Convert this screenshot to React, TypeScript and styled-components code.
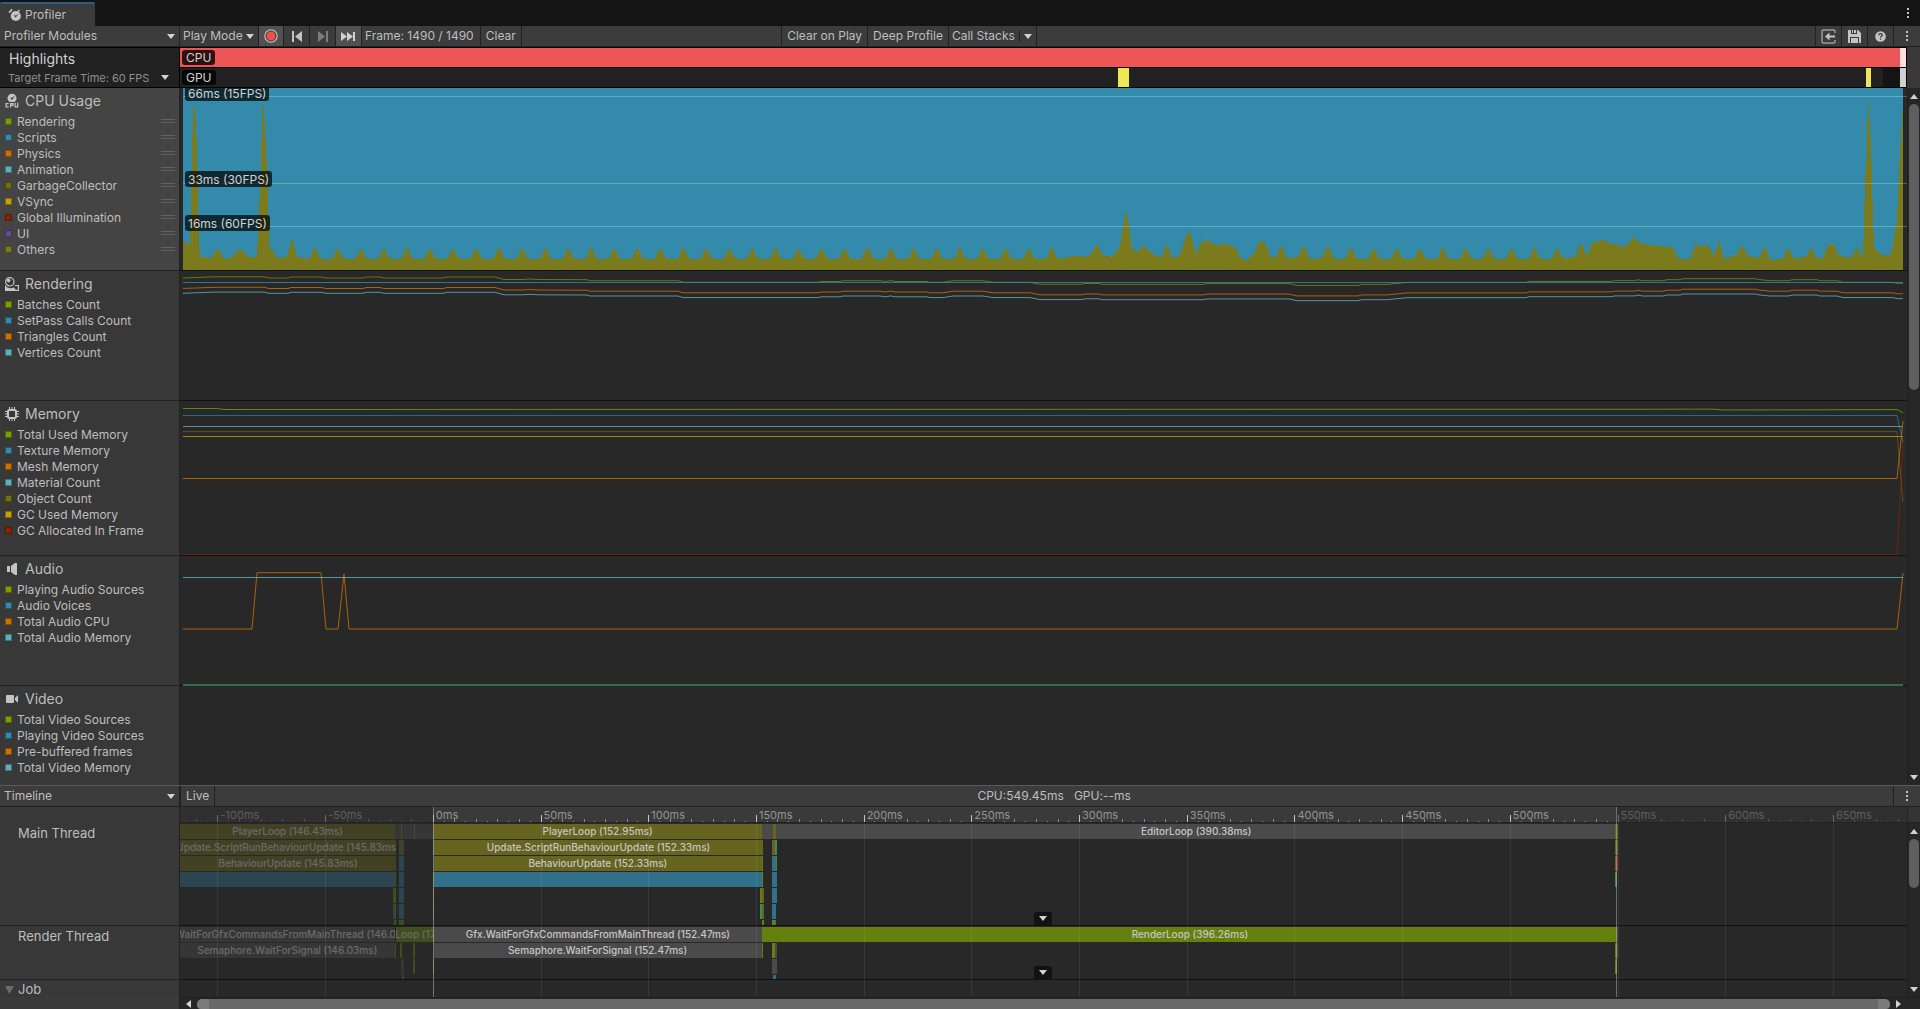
import React from "react";
import styled, { createGlobalStyle } from "styled-components";

/* ---------- theme ---------- */

const C = {
  window: "#141414",
  bar: "#3c3c3c",
  panel: "#383838",
  selected: "#444444",
  chart: "#282828",
  line: "#222222",
  text: "#bebebe",
  icon: "#c4c4c4",
};

const GlobalStyle = createGlobalStyle`
  *, *::before, *::after { box-sizing: border-box; }
  html, body { margin: 0; height: 100%; background: ${C.window}; overflow: hidden; }
  body { font-family: Inter, Roboto, "Liberation Sans", sans-serif; font-size: 12px; line-height: 16px; color: ${C.text}; }
  button, select, input { font: inherit; color: inherit; margin: 0; }
`;

const SIDE = 180;

const Window = styled.main`
  display: flex;
  flex-direction: column;
  height: 100vh;
  background: ${C.chart};
`;

/* ---------- tab strip ---------- */

const TabStrip = styled.header`
  display: flex;
  align-items: flex-end;
  justify-content: space-between;
  height: 26px;
  background: ${C.window};
`;

const Tab = styled.h1`
  display: flex;
  align-items: center;
  gap: 3px;
  width: 95px;
  height: 24px;
  margin: 0;
  padding-left: 8px;
  border-top: 2px solid #2c5d87;
  border-radius: 2px 2px 0 0;
  background: ${C.bar};
  font-size: 12px;
  font-weight: 400;
`;

const IconButton = styled.button<{ $width?: number; $lit?: boolean; $edge?: "left" | "right" }>`
  display: flex;
  align-items: center;
  justify-content: center;
  width: ${(p) => p.$width ?? 26}px;
  height: 100%;
  padding: 0;
  border: 0 solid ${C.line};
  border-left-width: ${(p) => (p.$edge === "left" ? 1 : 0)}px;
  border-right-width: ${(p) => (p.$edge === "right" ? 1 : 0)}px;
  background: ${(p) => (p.$lit ? "#515151" : "transparent")};
`;

/* ---------- toolbars ---------- */

const Toolbar = styled.div`
  display: flex;
  flex: none;
  height: 21px;
  background: ${C.bar};
  border-bottom: 1px solid ${C.line};
`;

const TextButton = styled.button<{ $edge?: boolean }>`
  height: 100%;
  padding: 0 5px;
  border: 0;
  border-right: 1px solid ${C.line};
  border-left: ${(p) => (p.$edge ? `1px solid ${C.line}` : "0")};
  background: transparent;
  white-space: nowrap;
`;

const SplitButton = styled(TextButton)`
  padding: 0 4px 0 3px;
  border-right: 0;
`;

const FrameLabel = styled.span`
  padding: 2px 6px 0 3px;
  border-right: 1px solid ${C.line};
  white-space: nowrap;
`;

const Space = styled.div<{ $grow: number }>`
  flex: ${(p) => p.$grow} 1 0;
`;

const StackArrow = styled.button`
  display: flex;
  align-items: center;
  height: 100%;
  padding: 0 4px 0 0;
  border: 0;
  border-right: 1px solid ${C.line};
  background: transparent;
  &::before {
    content: "";
    width: 1px;
    height: 12px;
    margin-right: 4px;
    background: ${C.line};
  }
`;

const FrameTotals = styled.output`
  flex: 1;
  padding-top: 2px;
  text-align: center;
  white-space: pre;
`;

const Picker = styled.span<{ $width?: number; $pad: number; $right: number; $edge?: boolean; $muted?: boolean }>`
  display: grid;
  flex: none;
  align-items: center;
  width: ${(p) => (p.$width ? `${p.$width}px` : "auto")};
  height: 100%;
  border-right: ${(p) => (p.$edge ? `1px solid ${C.line}` : "0")};
  color: ${(p) => (p.$muted ? "#8f8f8f" : C.text)};
  font-size: ${(p) => (p.$muted ? 11 : 12)}px;
  select {
    grid-area: 1 / 1;
    width: 100%;
    height: 100%;
    padding: 0 ${(p) => p.$right + 8}px 0 ${(p) => p.$pad}px;
    border: 0;
    background: transparent;
    appearance: none;
    opacity: 1;
  }
  svg {
    grid-area: 1 / 1;
    justify-self: end;
    margin-right: ${(p) => p.$right}px;
    pointer-events: none;
  }
`;

type PickerProps = { label: string; value: string; width?: number; pad: number; right: number; edge?: boolean; muted?: boolean };

function Dropdown({ label, value, width, pad, right, edge, muted }: PickerProps) {
  return (
    <Picker $width={width} $pad={pad} $right={right} $edge={edge} $muted={muted}>
      <select aria-label={label}>
        <option>{value}</option>
      </select>
      <Caret dir="down" />
    </Picker>
  );
}

/* ---------- icons ---------- */

const CARETS = {
  down: { w: 8, h: 5, d: "M0 0H8L4 5Z" },
  up: { w: 8, h: 5, d: "M0 5H8L4 0Z" },
  left: { w: 5, h: 8, d: "M5 0V8L0 4Z" },
  right: { w: 5, h: 8, d: "M0 0V8L5 4Z" },
};

function Caret({ dir }: { dir: keyof typeof CARETS }) {
  const c = CARETS[dir];
  return (
    <svg width={c.w} height={c.h} viewBox={`0 0 ${c.w} ${c.h}`} aria-hidden>
      <path d={c.d} fill="#d2d2d2" />
    </svg>
  );
}

const Kebab = () => (
  <svg width="2" height="10" viewBox="0 0 2 10" aria-hidden>
    <path d="M0 0h2v2h-2zM0 4h2v2h-2zM0 8h2v2h-2z" fill={C.icon} />
  </svg>
);

const StopwatchIcon = () => (
  <svg width="14" height="14" viewBox="0 0 14 14" aria-hidden>
    <path d="M1 4.6 4.2 1.4" stroke={C.icon} strokeWidth="1.6" fill="none" />
    <circle cx="7.8" cy="8" r="5.1" fill={C.icon} />
    <path d="M5.6 7.2 7.6 9.6 11.4 5.2 8.2 7.6Z" fill={C.bar} />
    <path d="M10 3.4 11.6 2" stroke={C.icon} strokeWidth="1.4" />
  </svg>
);

const RecordIcon = () => (
  <svg width="14" height="14" viewBox="0 0 14 14" aria-hidden>
    <circle cx="7" cy="7" r="6.2" fill="none" stroke="#c4c4c4" strokeWidth="1.1" />
    <circle cx="7" cy="7" r="4.2" fill="#ff4c40" />
  </svg>
);

const PrevIcon = () => (
  <svg width="12" height="11" viewBox="0 0 12 11" aria-hidden>
    <path d="M1 0h2v11H1zM11 0v11L4 5.5z" fill={C.icon} />
  </svg>
);

const NextIcon = () => (
  <svg width="12" height="11" viewBox="0 0 12 11" aria-hidden>
    <path d="M9 0h2v11H9zM1 0v11l7-5.5z" fill="#7d7d7d" />
  </svg>
);

const LastIcon = () => (
  <svg width="15" height="9" viewBox="0 0 15 9" aria-hidden>
    <path d="M0 0v9l6-4.500zM6 0v9l6-4.500zM12 0h2v9h-2z" fill="#d2d2d2" />
  </svg>
);

const LoadIcon = () => (
  <svg width="15" height="15" viewBox="0 0 15 15" aria-hidden>
    <path d="M14 4V2.500Q14 1 12.500 1H2.500Q1 1 1 2.500V12.500Q1 14 2.500 14H12.500Q14 14 14 12.500V11" fill="none" stroke="#9a9a9a" strokeWidth="1.5" />
    <path d="M4 7.500 8.500 3.500V6.500H14V8.500H8.500V11.500Z" fill={C.icon} />
  </svg>
);

const SaveIcon = () => (
  <svg width="13" height="13" viewBox="0 0 13 13" aria-hidden>
    <path fillRule="evenodd" d="M0 0H3V4H9V0H10L13 3V13H11V7H2V13H0ZM4 0H5V3H4ZM6 0H8V3H6ZM3 8H10V13H3Z" fill={C.icon} />
  </svg>
);

const HelpIcon = () => (
  <svg width="11" height="11" viewBox="0 0 11 11" aria-hidden>
    <circle cx="5.500" cy="5.500" r="5.300" fill={C.icon} />
    <path d="M3.700 4.200C3.800 2.200 7.300 2.200 7.300 4.200 7.300 5.300 5.500 5.200 5.500 6.600M5.500 7.600V8.800" fill="none" stroke="#333" strokeWidth="1.200" />
  </svg>
);

const CpuIcon = () => (
  <svg width="15" height="16" viewBox="0 0 15 16" aria-hidden>
    <circle cx="7.500" cy="5" r="4.800" fill={C.icon} />
    <path d="M5.500 4.800 7.500 6.800 11 2.400 8 4.200Z" fill={C.selected} />
    <path d="M0 9H15V16H0Z" fill={C.selected} />
    <path d="M4 10.700H1.200V14.300H4M6 15V10.700H8.600V12.800H6M10.800 10V14.300H13.600V10" fill="none" stroke={C.icon} strokeWidth="1.300" />
  </svg>
);

const RenderingIcon = () => (
  <svg width="14" height="14" viewBox="0 0 14 14" aria-hidden>
    <circle cx="4.800" cy="4.800" r="4.200" fill="none" stroke={C.icon} strokeWidth="1.200" />
    <circle cx="3.600" cy="3.600" r="1.800" fill={C.icon} />
    <path d="M0.600 8.500V13.300H13.400V8.500H9.800" fill="none" stroke={C.icon} strokeWidth="1.200" />
    <path d="M1 9.500Q4 12.500 9 10.500L11 13H1Z" fill={C.icon} />
  </svg>
);

const MemoryIcon = () => (
  <svg width="14" height="14" viewBox="0 0 14 14" aria-hidden>
    <path d="M4.500 0V14M7 0V14M9.500 0V14M0 4.500H14M0 7H14M0 9.500H14" stroke={C.icon} strokeWidth="1" />
    <rect x="3" y="3" width="8" height="8" rx="1.500" fill={C.panel} stroke={C.icon} strokeWidth="2" />
  </svg>
);

const AudioIcon = () => (
  <svg width="14" height="14" viewBox="0 0 14 14" aria-hidden>
    <path d="M2 4H5V10H2ZM6 4 10 1H12V13H10L6 10Z" fill={C.icon} />
  </svg>
);

const VideoIcon = () => (
  <svg width="14" height="14" viewBox="0 0 14 14" aria-hidden>
    <rect x="1" y="3" width="8" height="8" rx="1" fill={C.icon} />
    <path d="M10 6 13 3V11L10 8Z" fill={C.icon} />
  </svg>
);

/* ---------- highlights ---------- */

const Highlights = styled.section`
  display: flex;
  flex: none;
  height: 41px;
  background: ${C.panel};
`;

const HighlightsSide = styled.div`
  width: ${SIDE}px;
  padding-top: 1px;
  border: solid #000;
  border-width: 1px 1px 1px 0;
  background: #212121;
`;

const HighlightsTitle = styled.h2`
  margin: 0;
  padding-left: 9px;
  font-size: 14px;
  line-height: 20px;
  font-weight: 400;
  color: #d2d2d2;
`;

const TargetRow = styled.div`
  height: 17px;
`;

const Strips = styled.div`
  flex: 1;
  border-top: 1px solid #000;
  border-right: 1px solid #000;
`;

const Strip = styled.div<{ $hot?: boolean }>`
  position: relative;
  height: 20px;
  border-bottom: 1px solid #000;
  background: ${(p) => (p.$hot ? "#ed5656" : "#212121")};
`;

const Mark = styled.i<{ $color: string }>`
  position: absolute;
  top: 0;
  bottom: 0;
  background: ${(p) => p.$color};
`;

const Badge = styled.span`
  position: absolute;
  left: 2px;
  padding: 0 4px;
  border-radius: 3px;
  background: rgba(0, 0, 0, 0.8);
  color: #d2d2d2;
  white-space: nowrap;
`;

const StripBadge = styled(Badge)`
  top: 2px;
  line-height: 15px;
`;

const RightGutter = styled.div`
  width: 13px;
`;

const GPU_MARKS = [
  { from: 938, to: 949, color: "#efe856" },
  { from: 1686, to: 1691, color: "#efe856" },
  { from: 1703, to: 1720, color: "#141414" },
  { from: 1720, to: 1726, color: "#d0d0d0" },
];

const stripSpan = (from: number, to: number) => ({ left: `${(from / 1726) * 100}%`, width: `${((to - from) / 1726) * 100}%` });

/* ---------- module list ---------- */

const Modules = styled.section`
  display: flex;
  flex: 1;
  min-height: 0;
`;

const ModuleList = styled.div`
  flex: 1;
  min-width: 0;
  overflow: hidden;
`;

const ModuleRow = styled.article<{ $height: number }>`
  display: flex;
  height: ${(p) => p.$height}px;
`;

const ModuleSide = styled.div<{ $selected?: boolean }>`
  flex: none;
  width: ${SIDE}px;
  border: solid ${C.line};
  border-width: 0 1px 1px 0;
  background: ${(p) => (p.$selected ? C.selected : C.panel)};
`;

const ModuleTitle = styled.h2`
  display: flex;
  align-items: center;
  gap: 6px;
  height: 25px;
  margin: 0;
  padding-left: 5px;
  font-size: 14px;
  font-weight: 400;
  svg { width: 14px; }
`;

const Legend = styled.ul`
  margin: 0;
  padding: 0;
  list-style: none;
`;

const LegendItem = styled.li`
  display: flex;
  align-items: center;
  justify-content: space-between;
  height: 16px;
  padding: 0 4px 0 5px;
  label {
    display: flex;
    align-items: center;
    gap: 5px;
  }
`;

const LegendText = styled.span`
  padding-top: 2px;
`;

const Swatch = styled.input<{ $color: string }>`
  width: 7px;
  height: 7px;
  border: 1px solid rgba(0, 0, 0, 0.35);
  background: ${(p) => p.$color};
  appearance: none;
`;

const Grip = styled.span`
  width: 14px;
  height: 4px;
  border: solid #626262;
  border-width: 1px 0;
`;

const ChartPane = styled.div`
  position: relative;
  flex: 1;
  min-width: 0;
  padding: 0 4px 0 3px;
  border-bottom: 1px solid #111;
  background: ${C.chart};
`;

const ChartSvg = styled.svg`
  display: block;
  width: 100%;
  height: 100%;
  overflow: visible;
`;

const GuideLine = styled.i`
  position: absolute;
  left: 3px;
  right: 0;
  height: 1px;
  background: rgba(255, 255, 255, 0.25);
`;

const GuideBadge = styled(Badge)`
  left: 5px;
  padding: 1px 3px 0;
  line-height: 15px;
  background: rgba(0, 0, 0, 0.7);
`;

const Clip = styled.div`
  position: absolute;
  inset: 0;
  overflow: hidden;
`;

const COLORS = {
  green: "#7a9e00",
  blue: "#338aab",
  orange: "#cc7000",
  cyan: "#60b0bb",
  olive: "#756f10",
  gold: "#c8a000",
  red: "#8a2407",
  purple: "#674b8e",
  other: "#7b7b1e",
};

type Point = [number, number];

/* Outline of the "Others" band. The first and last stretches are sampled by hand,
   the regular ones between are garbage free frames with one bump every 23 px. */
const OTHERS_START: Point[] = [
  [0, 153], [4, 155], [7, 158], [8, 107], [9, 62], [10, 29], [11, 12], [13, 34], [14, 67], [15, 122], [16, 150], [17, 169],
  [28, 170], [35, 160], [41, 171], [47, 170], [57, 160], [63, 167], [69, 170], [74, 168], [75, 143], [76, 122], [78, 77],
  [79, 30], [80, 9], [82, 42], [83, 57], [85, 107], [86, 158], [90, 163], [94, 170], [104, 169], [109, 150], [114, 169],
];

const OTHERS_END: Point[] = [
  [892, 168], [898, 168], [904, 169], [909, 165], [914, 155], [919, 167], [928, 169], [932, 166], [937, 158], [941, 134], [943, 121],
  [946, 137], [949, 161], [955, 164], [961, 157], [969, 166], [976, 169], [979, 168], [984, 155], [989, 170], [996, 168],
  [1000, 159], [1003, 148], [1006, 142], [1010, 154], [1013, 166], [1018, 155], [1023, 152], [1034, 157], [1041, 156],
  [1049, 158], [1053, 160], [1058, 171], [1064, 172], [1071, 166], [1075, 155], [1081, 153], [1088, 169], [1093, 169],
  [1098, 157], [1104, 170], [1115, 169], [1121, 157], [1127, 171], [1139, 170], [1145, 157], [1151, 171],
];

const OTHERS_TAIL: Point[] = [
  [1383, 170], [1392, 169], [1398, 155], [1404, 168], [1409, 155], [1418, 152], [1426, 155], [1443, 159], [1450, 149],
  [1456, 155], [1474, 158], [1490, 159], [1495, 171], [1507, 171], [1513, 156], [1520, 159], [1524, 155], [1531, 168],
  [1536, 152], [1541, 171], [1550, 168], [1554, 166], [1559, 157], [1565, 168], [1576, 170], [1582, 158], [1587, 172],
  [1600, 171], [1605, 159], [1610, 170], [1623, 169], [1628, 159], [1633, 170], [1640, 170], [1645, 157], [1651, 157],
  [1656, 168], [1668, 170], [1674, 159], [1680, 171], [1681, 132], [1682, 94], [1684, 62], [1685, 3], [1686, 25], [1688, 54],
  [1689, 97], [1691, 159], [1695, 164], [1702, 168], [1708, 166], [1711, 149], [1714, 132], [1715, 107], [1717, 62], [1719, 32], [1720, 14],
];

function bumps(from: number, count: number, step: number): Point[] {
  return Array.from({ length: count }).flatMap((_, i): Point[] => {
    const x = from + i * step;
    const top = i % 4 === 0 ? 158 : 160;
    return [[x - 6, 171], [x - 3, 165], [x, top], [x + 3, 166], [x + 6, 171]];
  });
}

const OTHERS: Point[] = [
  ...OTHERS_START,
  ...bumps(132, 33, 23.03),
  ...OTHERS_END,
  ...bumps(1168, 10, 22.95),
  ...OTHERS_TAIL,
];

const SPECKS: { x: number; y: number; color: string }[] = [
  [22, 168], [63, 165], [152, 170], [288, 170], [372, 171], [387, 170], [392, 165], [455, 165], [456, 160], [540, 171],
  [673, 170], [696, 164], [820, 170], [927, 168], [941, 126], [1024, 151], [1067, 168], [1418, 151], [1551, 167], [1702, 167], [1647, 156], [1649, 156],
].map(([x, y], i) => ({ x, y, color: i % 5 === 4 ? COLORS.purple : "#d07a10" }));

const BATCHES: Point[] = [
  [0, 7], [31, 5.8], [81, 5.8], [86, 7], [105, 7], [108, 6], [138, 6], [143, 7], [180, 7], [183, 6], [197, 6], [201, 7], [260, 7],
  [264, 6], [312, 6], [321, 8.5], [340, 8.5], [346, 8], [356, 8.5], [404, 8.7], [407, 9.7], [495, 9.7], [500, 11.3], [634, 11.3],
  [639, 10.5], [657, 10.5], [660, 9.7], [697, 9.7], [702, 10.5], [708, 9.6], [712, 10.5], [744, 10.5], [747, 11.3], [760, 11.3],
  [770, 9.7], [800, 9.7], [810, 11.3], [847, 11.3], [857, 13.3], [898, 13.3], [902, 12.5], [916, 12.5], [919, 13.4], [1020, 13.4],
  [1024, 12.6], [1106, 12.6], [1114, 14.4], [1175, 14.4], [1179, 13.4], [1204, 13.4], [1224, 11.4], [1343, 11.4], [1346, 10.4],
  [1428, 10.4], [1432, 9.6], [1452, 9.6], [1455, 8.8], [1460, 9.7], [1480, 9.7], [1484, 8.7], [1497, 8.7], [1500, 7.7], [1572, 7.7],
  [1577, 8.7], [1587, 9.7], [1605, 9.7], [1610, 8.7], [1634, 8.7], [1637, 9.7], [1654, 9.7], [1660, 11.3], [1710, 11.3], [1714, 12.3], [1720, 12.3],
];

const shift = (points: Point[], dy: number): Point[] => points.map(([x, y]) => [x, y + dy]);
const flat = (y: number, end = y): Point[] => [[0, y], [1714, y], [1720, end]];
const path = (points: Point[]) => points.map(([x, y]) => `${x},${y}`).join(" ");

type Series = { color: string; points: Point[]; strength?: number; thick?: number };
type Module = {
  name: string;
  icon: React.ReactNode;
  height: number;
  legend: [string, string][];
  series: Series[];
  selected?: boolean;
};

const MODULES: Module[] = [
  {
    name: "CPU Usage",
    icon: <CpuIcon />,
    height: 183,
    selected: true,
    legend: [
      ["Rendering", COLORS.green], ["Scripts", COLORS.blue], ["Physics", COLORS.orange], ["Animation", COLORS.cyan],
      ["GarbageCollector", COLORS.olive], ["VSync", COLORS.gold], ["Global Illumination", COLORS.red], ["UI", COLORS.purple],
      ["Others", COLORS.other],
    ],
    series: [],
  },
  {
    name: "Rendering",
    icon: <RenderingIcon />,
    height: 130,
    legend: [
      ["Batches Count", COLORS.green], ["SetPass Calls Count", COLORS.blue], ["Triangles Count", COLORS.orange], ["Vertices Count", COLORS.cyan],
    ],
    series: [
      { color: COLORS.green, points: BATCHES, strength: 0.7 },
      { color: COLORS.blue, points: flat(11.5) },
      { color: COLORS.orange, points: shift(BATCHES, 10.5) },
      { color: COLORS.cyan, points: shift(BATCHES, 15.3) },
    ],
  },
  {
    name: "Memory",
    icon: <MemoryIcon />,
    height: 155,
    legend: [
      ["Total Used Memory", COLORS.green], ["Texture Memory", COLORS.blue], ["Mesh Memory", COLORS.orange], ["Material Count", COLORS.cyan],
      ["Object Count", COLORS.olive], ["GC Used Memory", COLORS.gold], ["GC Allocated In Frame", COLORS.red],
    ],
    series: [
      { color: COLORS.green, points: [[0, 7.5], [34, 7.5], [41, 8.5], [1530, 8.2], [1540, 9], [1714, 8.6], [1720, 12]] },
      { color: COLORS.blue, points: flat(14.5, 41), strength: 0.65 },
      { color: COLORS.cyan, points: [[0, 25.5], [1720, 25.5]] },
      { color: COLORS.olive, points: flat(30.6, 101), strength: 0.6 },
      { color: COLORS.gold, points: [[0, 35.5], [1720, 35.5]], strength: 0.75 },
      { color: COLORS.orange, points: flat(77.5, 20) },
      { color: COLORS.red, points: flat(153.6, 41), strength: 0.7 },
    ],
  },
  {
    name: "Audio",
    icon: <AudioIcon />,
    height: 130,
    legend: [
      ["Playing Audio Sources", COLORS.green], ["Audio Voices", COLORS.blue], ["Total Audio CPU", COLORS.orange], ["Total Audio Memory", COLORS.cyan],
    ],
    series: [
      {
        color: COLORS.orange,
        points: [[0, 73], [69, 73], [74, 16.7], [138, 16.7], [143, 73], [155, 73], [161, 18], [166, 73], [1714, 73], [1720, 17]],
      },
      { color: COLORS.cyan, points: [[0, 21.5], [1720, 21.5]] },
      { color: "#407a56", points: [[0, 129], [1720, 129]], thick: 2 },
    ],
  },
  {
    name: "Video",
    icon: <VideoIcon />,
    height: 130,
    legend: [
      ["Total Video Sources", COLORS.green], ["Playing Video Sources", COLORS.blue], ["Pre-buffered frames", COLORS.orange], ["Total Video Memory", COLORS.cyan],
    ],
    series: [],
  },
];

const GUIDES = [
  { text: "66ms (15FPS)", line: 8, top: -3 },
  { text: "33ms (30FPS)", line: 95, top: 83 },
  { text: "16ms (60FPS)", line: 138, top: 127 },
];

function CpuChart() {
  return (
    <>
      <ChartSvg viewBox="0 0 1720 182" preserveAspectRatio="none" role="img" aria-label="CPU usage">
        <rect width="1720" height="182" fill={COLORS.blue} />
        <polygon points={`0,182 ${path(OTHERS)} 1720,182`} fill={COLORS.other} shapeRendering="crispEdges" />
        {SPECKS.map((s) => (
          <rect key={`${s.x}-${s.y}`} x={s.x} y={s.y} width="1" height="1" fill={s.color} />
        ))}
      </ChartSvg>
      <Clip>
        {GUIDES.map((g) => (
          <React.Fragment key={g.text}>
            <GuideLine style={{ top: g.line }} />
            <GuideBadge style={{ top: g.top }}>{g.text}</GuideBadge>
          </React.Fragment>
        ))}
      </Clip>
    </>
  );
}

function ModuleView({ module }: { module: Module }) {
  return (
    <ModuleRow $height={module.height}>
      <ModuleSide $selected={module.selected}>
        <ModuleTitle>
          {module.icon}
          {module.name}
        </ModuleTitle>
        <Legend>
          {module.legend.map(([name, color]) => (
            <LegendItem key={name}>
              <label>
                <Swatch type="checkbox" defaultChecked $color={color} />
                <LegendText>{name}</LegendText>
              </label>
              {module.selected && <Grip />}
            </LegendItem>
          ))}
        </Legend>
      </ModuleSide>
      <ChartPane>
        {module.selected ? (
          <CpuChart />
        ) : (
          <ChartSvg viewBox={`0 0 1720 ${module.height - 1}`} preserveAspectRatio="none" role="img" aria-label={module.name}>
            {module.series.map((s) => (
              <polyline
                key={s.color}
                points={path(s.points)}
                fill="none"
                stroke={s.color}
                strokeWidth={s.thick ?? 1}
                strokeOpacity={s.strength ?? 0.8}
                vectorEffect="non-scaling-stroke"
              />
            ))}
          </ChartSvg>
        )}
      </ChartPane>
    </ModuleRow>
  );
}

/* ---------- scroll bars ---------- */

const VTrack = styled.div`
  display: flex;
  flex: none;
  flex-direction: column;
  width: 13px;
  border-left: 1px solid #202020;
  background: #262626;
`;

const VThumb = styled.div<{ $share: number }>`
  flex: ${(p) => p.$share} 1 0;
  margin: 0 1px;
  border-radius: 5px;
  background: #5f5f5f;
`;

const StepButton = styled.button<{ $wide?: boolean }>`
  display: flex;
  flex: none;
  align-items: center;
  justify-content: center;
  width: ${(p) => (p.$wide ? "17px" : "100%")};
  height: ${(p) => (p.$wide ? "100%" : "16px")};
  padding: 0;
  border: 0;
  background: transparent;
`;

function VScroll({ thumb, rest }: { thumb: number; rest: number }) {
  return (
    <VTrack>
      <StepButton aria-label="Scroll up"><Caret dir="up" /></StepButton>
      <VThumb $share={thumb} />
      <Space $grow={rest} />
      <StepButton aria-label="Scroll down"><Caret dir="down" /></StepButton>
    </VTrack>
  );
}

const HTrack = styled.div`
  display: flex;
  flex: none;
  height: 12px;
  background: #262626;
  border-top: 1px solid #202020;
`;

const HSide = styled.div`
  width: ${SIDE}px;
  margin-top: -1px;
  border-right: 1px solid ${C.line};
  background: #3a3a3a;
`;

const HThumb = styled.div`
  flex: 1;
  margin-top: 1px;
  border: solid #7b7b7b;
  border-width: 0 12px;
  border-radius: 5px 5px 4px 4px;
  background: #686868;
`;

/* ---------- timeline ---------- */

const Timeline = styled.section`
  display: flex;
  flex: none;
  flex-direction: column;
  border-top: 1px solid #5a5a5a;
`;

const TimelineBody = styled.div`
  display: flex;
`;

const ThreadNames = styled.div`
  flex: none;
  width: ${SIDE}px;
  padding-top: 16px;
  border-right: 1px solid ${C.line};
  background: ${C.panel};
`;

const ThreadName = styled.h3<{ $height: number }>`
  display: flex;
  align-items: flex-start;
  gap: 4px;
  height: ${(p) => p.$height}px;
  margin: 0;
  padding-left: 18px;
  border-bottom: 1px solid ${C.line};
  font-size: 13px;
  line-height: 21px;
  font-weight: 400;
`;

const JobName = styled(ThreadName)`
  align-items: center;
  padding: 2px 0 0 5px;
  border-bottom: 0;
`;

const Tracks = styled.div`
  position: relative;
  flex: 1;
  min-width: 0;
  overflow: hidden;
  background: ${C.chart};
`;

const Ruler = styled.div`
  position: relative;
  height: 16px;
  overflow: hidden;
  border-bottom: 1px solid #222;
  background: #303030;
`;

const RulerActive = styled.i`
  position: absolute;
  top: 0;
  bottom: 0;
  background: #3a3a3a;
`;

const Tick = styled.i<{ $tall: number; $dim: boolean }>`
  position: absolute;
  bottom: 0;
  width: 1px;
  height: ${(p) => p.$tall}px;
  background: ${(p) => (p.$tall === 7 ? (p.$dim ? "#6a6a6a" : "#c4c4c4") : p.$dim ? "#4c4c4c" : "#8a8a8a")};
`;

const TickText = styled.span<{ $dim: boolean }>`
  position: absolute;
  top: 1px;
  padding-left: 3px;
  font-size: 11px;
  line-height: 15px;
  color: ${(p) => (p.$dim ? "#5e5e5e" : "#949494")};
  white-space: nowrap;
`;

const Lane = styled.div<{ $height: number }>`
  position: relative;
  display: flex;
  flex-direction: column;
  gap: 1px;
  height: ${(p) => p.$height}px;
  padding-top: 1px;
  overflow: hidden;
  border-bottom: 1px solid #111;
`;

const LaneRow = styled.div`
  position: relative;
  flex: none;
  height: 15px;
`;

const Sample = styled.span<{ $color: string; $dim: boolean }>`
  position: absolute;
  top: 0;
  bottom: 0;
  display: flex;
  align-items: center;
  justify-content: center;
  overflow: hidden;
  background: ${(p) => p.$color};
  opacity: ${(p) => (p.$dim ? 0.42 : 1)};
  font-size: 10px;
  font-weight: 500;
  line-height: 15px;
  color: #c6c6c6;
  white-space: nowrap;
`;

const VLine = styled.i<{ $strong?: boolean }>`
  position: absolute;
  top: ${(p) => (p.$strong ? 0 : 16)}px;
  bottom: 0;
  width: 1px;
  background: ${(p) => (p.$strong ? "rgba(180, 180, 180, 0.5)" : "rgba(255, 255, 255, 0.07)")};
`;

const Expand = styled.button`
  position: absolute;
  bottom: 0;
  left: 50%;
  display: flex;
  align-items: center;
  justify-content: center;
  width: 18px;
  height: 13px;
  margin-left: -10px;
  padding: 0;
  border: 0;
  border-radius: 3px 3px 0 0;
  background: #121212;
`;

const RulerCorner = styled.div`
  height: 16px;
  border: solid #222;
  border-width: 0 0 1px 1px;
  background: #343434;
`;

const TimelineScroll = styled.div`
  display: flex;
  flex: none;
  flex-direction: column;
  width: 13px;
  > :last-child { flex: 1; }
`;

const VIEW_START = -117.4;
const VIEW_LENGTH = 801.8;
const FRAME = 549.45;
const at = (ms: number) => `${((ms - VIEW_START) / VIEW_LENGTH) * 100}%`;
const span = (from: number, to: number) => ({ left: at(from), width: `${((to - from) / VIEW_LENGTH) * 100}%` });

const T = { olive: "#66641f", blue: "#30708a", grey: "#4a4a4a", green: "#65800e", teal: "#3f8a55", red: "#9a2e3c" };

type Bar = [from: number, to: number, color: string, label?: string];

const MAIN: Bar[][] = [
  [
    [-117.4, -17.4, T.olive, "PlayerLoop (146.43ms)"], [-17.4, 0, T.grey], [-15, -14.2, T.olive], [-8.6, -8.1, T.olive],
    [0, 152.95, T.olive, "PlayerLoop (152.95ms)"], [152.95, 158, T.grey], [158, 159.2, T.olive],
    [159.2, 549.6, T.grey, "EditorLoop (390.38ms)"], [548.9, 550.2, T.olive],
  ],
  [
    [-117.4, -17, T.olive, "Update.ScriptRunBehaviourUpdate (145.83ms)"], [-15.6, -13.7, T.olive], [-14, -13.6, T.blue],
    [0, 0.6, T.blue], [0.6, 153.2, T.olive, "Update.ScriptRunBehaviourUpdate (152.33ms)"], [157.6, 158.9, T.olive], [158.9, 159.7, T.teal],
    [548.9, 550.2, T.olive],
  ],
  [
    [-117.4, -17, T.olive, "BehaviourUpdate (145.83ms)"], [-15.6, -13.6, T.blue], [0.3, 152.9, T.olive, "BehaviourUpdate (152.33ms)"],
    [152.9, 153.4, T.green], [157.6, 159.2, T.blue], [159.2, 159.7, T.green], [548.9, 549.7, T.olive], [549.7, 550.2, T.red],
  ],
  [
    [-117.4, -17.6, T.blue], [-17.6, -17, T.green], [-15.6, -13.6, T.blue], [0, 0.6, T.olive], [0.6, 152.9, T.blue],
    [152.9, 153.4, T.green], [157.6, 159.7, T.blue], [548.9, 549.7, T.teal],
  ],
  [[-18.4, -17, T.green], [-15.6, -13.6, T.blue], [0, 0.6, T.olive], [152, 153, T.green], [153, 153.6, T.olive], [157.6, 159.7, T.blue]],
  [[-18.4, -17.6, T.blue], [-17.6, -17, T.green], [-15.6, -13.6, T.blue], [0, 0.6, T.olive], [152, 153, T.teal], [153, 153.6, T.olive], [157.6, 159.2, T.blue]],
  [[-18, -17, T.green], [-15.6, -13.7, T.green], [-14, -13.6, T.blue], [152.6, 153.6, T.green], [157.6, 158.7, T.green], [158.7, 159.2, T.blue]],
];

const RENDER: Bar[][] = [
  [
    [-117.4, -17.4, T.grey, "Gfx.WaitForGfxCommandsFromMainThread (146.03ms)"], [-17.2, 0, T.green, "RenderLoop (17.24ms)"],
    [0, 0.6, T.green], [0.6, 152.7, T.grey, "Gfx.WaitForGfxCommandsFromMainThread (152.47ms)"], [152.7, 153.2, T.green],
    [153.4, 549.6, T.green, "RenderLoop (396.26ms)"], [549.6, 550.1, T.grey],
  ],
  [
    [-117.4, -17.8, T.grey, "Semaphore.WaitForSignal (146.03ms)"], [-17.8, -17, T.green], [-15.4, -14.4, T.green], [-9.1, -8.1, T.green],
    [0.3, 152.6, T.grey, "Semaphore.WaitForSignal (152.47ms)"], [152.6, 153.2, T.green], [157.6, 158.7, T.green], [158.7, 159.7, T.grey],
    [548.9, 549.7, T.green], [549.7, 550.2, T.grey],
  ],
  [[-15, -13.6, T.grey], [-9.1, -8.1, T.green], [0, 0.6, T.olive], [157.6, 159.7, T.grey], [548.9, 549.7, T.green]],
  [[-14.5, -13.6, T.blue], [158, 159.2, T.blue]],
];

const MAJOR = Array.from({ length: 16 }, (_, i) => (i - 2) * 50);
const TICKS = Array.from({ length: 161 }, (_, i) => (i - 23) * 5);

function LaneView({ rows, height, name }: { rows: Bar[][]; height: number; name: string }) {
  return (
    <Lane $height={height}>
      {rows.map((row, r) => (
        <LaneRow key={r}>
          {row.map(([from, to, color, label]) => (
            <Sample key={`${from}-${color}`} $color={color} $dim={to <= 0} style={span(from, to)}>
              {label}
            </Sample>
          ))}
        </LaneRow>
      ))}
      <Expand aria-label={`Expand ${name}`}><Caret dir="down" /></Expand>
    </Lane>
  );
}

function TimelineView() {
  return (
    <Timeline>
      <Toolbar>
        <Dropdown label="Details view" value="Timeline" width={SIDE} pad={4} right={4} edge />
        <TextButton $edge>Live</TextButton>
        <FrameTotals>{"CPU:549.45ms   GPU:--ms"}</FrameTotals>
        <IconButton $width={27} $edge="left" aria-label="Timeline options"><Kebab /></IconButton>
      </Toolbar>
      <TimelineBody>
        <ThreadNames>
          <ThreadName $height={103}>Main Thread</ThreadName>
          <ThreadName $height={54}>Render Thread</ThreadName>
          <JobName $height={17}>
            <svg width="9" height="8" viewBox="0 0 9 8" aria-hidden><path d="M0 0H9L4.500 8Z" fill="#6b6b6b" /></svg>
            Job
          </JobName>
        </ThreadNames>
        <Tracks>
          <Ruler>
            <RulerActive style={span(0, FRAME)} />
            {TICKS.map((ms) => (
              <Tick key={ms} $tall={ms % 50 === 0 ? 7 : ms % 10 === 0 ? 3 : 1} $dim={ms < 0 || ms > FRAME} style={{ left: at(ms) }} />
            ))}
            {MAJOR.map((ms) => (
              <TickText key={ms} $dim={ms < 0 || ms > FRAME} style={{ left: at(ms) }}>{ms}ms</TickText>
            ))}
          </Ruler>
          <LaneView rows={MAIN} height={103} name="Main Thread" />
          <LaneView rows={RENDER} height={54} name="Render Thread" />
          {MAJOR.map((ms) => <VLine key={ms} style={{ left: at(ms) }} />)}
          <VLine $strong style={{ left: at(0) }} />
          <VLine $strong style={{ left: at(FRAME) }} />
        </Tracks>
        <TimelineScroll>
          <RulerCorner />
          <VScroll thumb={49} rest={93} />
        </TimelineScroll>
      </TimelineBody>
      <HTrack>
        <HSide />
        <StepButton $wide aria-label="Scroll left"><Caret dir="left" /></StepButton>
        <HThumb />
        <StepButton $wide aria-label="Scroll right"><Caret dir="right" /></StepButton>
        <RightGutter />
      </HTrack>
    </Timeline>
  );
}

/* ---------- page ---------- */

export default function App() {
  return (
    <Window>
      <GlobalStyle />
      <TabStrip>
        <Tab><StopwatchIcon />Profiler</Tab>
        <IconButton $width={24} aria-label="Window menu"><Kebab /></IconButton>
      </TabStrip>

      <Toolbar>
        <Dropdown label="Profiler modules" value="Profiler Modules" width={SIDE} pad={4} right={4} edge />
        <Dropdown label="Target" value="Play Mode" width={79} pad={3} right={4} edge />
        <IconButton $lit $width={25} $edge="right" aria-label="Record"><RecordIcon /></IconButton>
        <IconButton $edge="right" aria-label="Previous frame"><PrevIcon /></IconButton>
        <IconButton $edge="right" aria-label="Next frame"><NextIcon /></IconButton>
        <IconButton $lit $edge="right" aria-label="Current frame"><LastIcon /></IconButton>
        <FrameLabel>Frame: 1490 / 1490</FrameLabel>
        <TextButton>Clear</TextButton>
        <Space $grow={1} />
        <TextButton $edge>Clear on Play</TextButton>
        <TextButton>Deep Profile</TextButton>
        <SplitButton>Call Stacks</SplitButton>
        <StackArrow aria-label="Call stack options"><Caret dir="down" /></StackArrow>
        <Space $grow={3} />
        <IconButton $edge="left" aria-label="Load"><LoadIcon /></IconButton>
        <IconButton $edge="left" aria-label="Save"><SaveIcon /></IconButton>
        <IconButton $edge="left" aria-label="Help"><HelpIcon /></IconButton>
        <IconButton $width={27} $edge="left" aria-label="More"><Kebab /></IconButton>
      </Toolbar>

      <Highlights>
        <HighlightsSide>
          <HighlightsTitle>Highlights</HighlightsTitle>
          <TargetRow>
            <Dropdown label="Target frame time" value="Target Frame Time: 60 FPS" width={179} pad={8} right={10} muted />
          </TargetRow>
        </HighlightsSide>
        <Strips>
          <Strip $hot>
            <Mark $color="#ffdede" style={stripSpan(1720, 1726)} />
            <StripBadge>CPU</StripBadge>
          </Strip>
          <Strip>
            {GPU_MARKS.map((m) => <Mark key={m.from} $color={m.color} style={stripSpan(m.from, m.to)} />)}
            <StripBadge>GPU</StripBadge>
          </Strip>
        </Strips>
        <RightGutter />
      </Highlights>

      <Modules>
        <ModuleList>
          {MODULES.map((m) => <ModuleView key={m.name} module={m} />)}
        </ModuleList>
        <VScroll thumb={286} rest={380} />
      </Modules>

      <TimelineView />
    </Window>
  );
}
